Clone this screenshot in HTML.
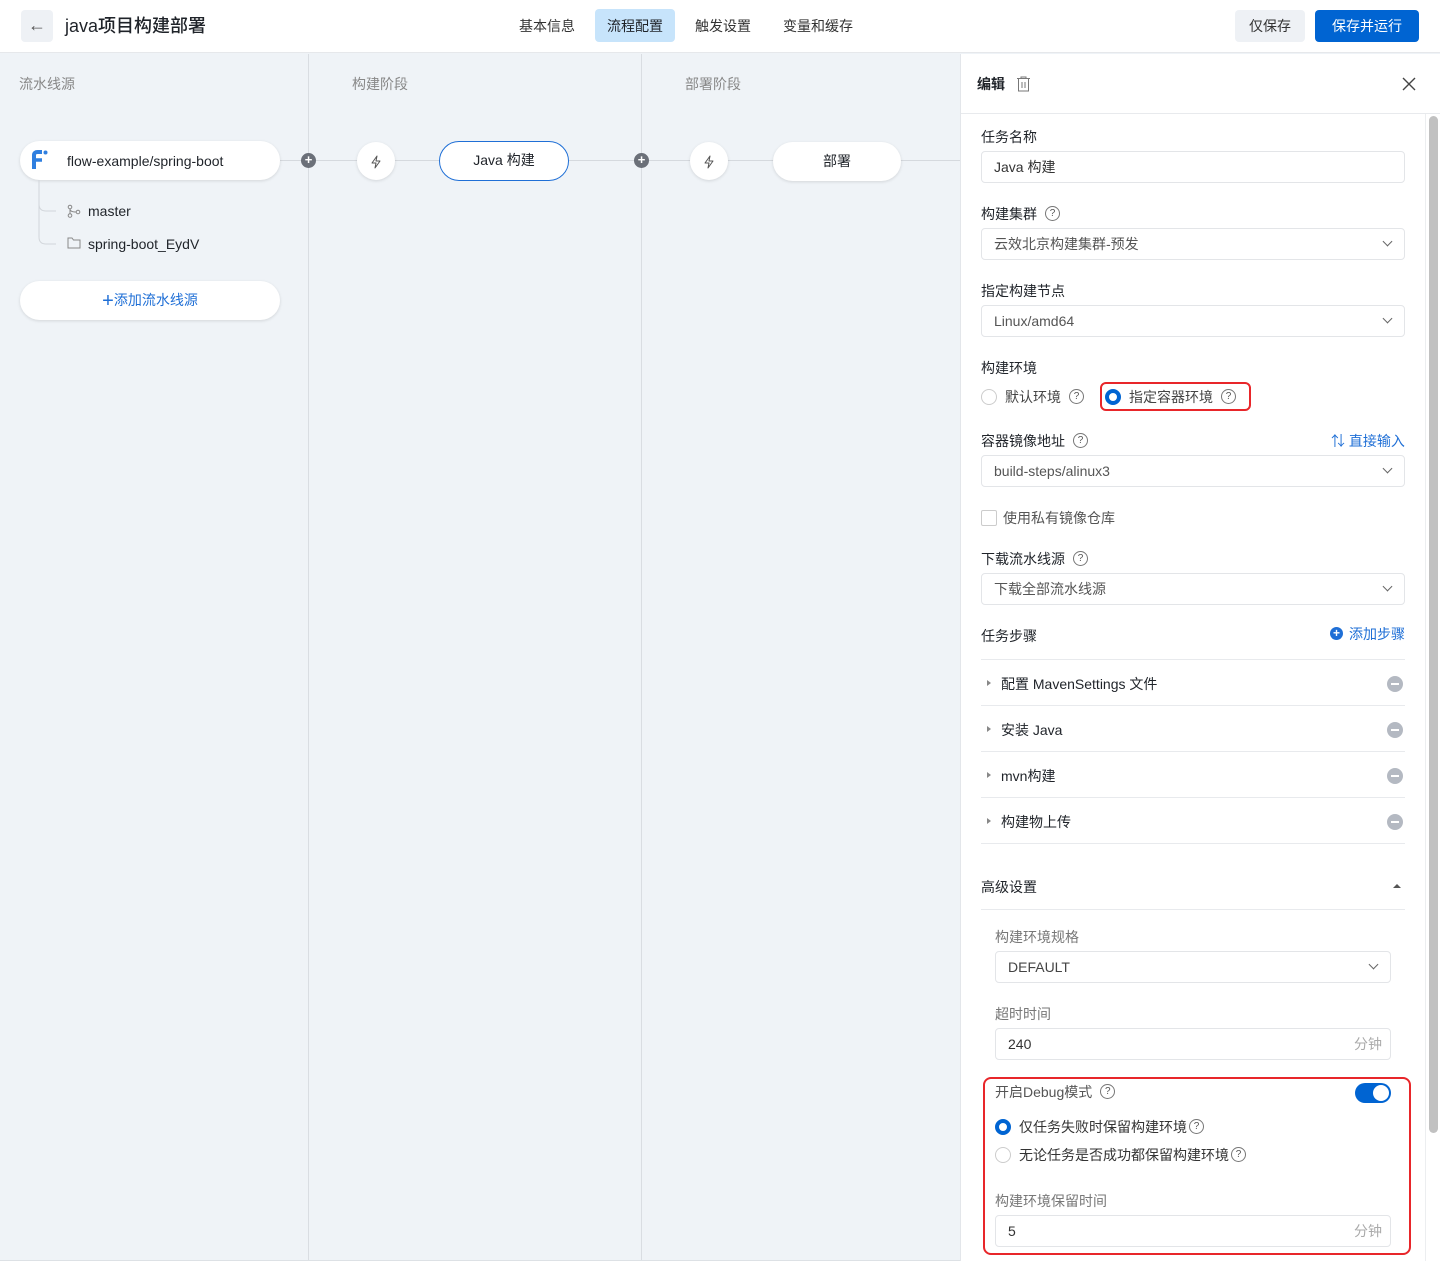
<!DOCTYPE html>
<html><head><meta charset="utf-8"><style>
*{box-sizing:border-box;margin:0;padding:0}
body{width:1440px;height:1261px;position:relative;overflow:hidden;background:#eff3f7;font-family:"Liberation Sans","Noto Sans CJK SC",sans-serif;font-size:14px;color:#1f2329}
.a{position:absolute}
.t{position:absolute;height:20px;line-height:20px;white-space:nowrap}
.box{position:absolute;border:1px solid #e3e5e8;border-radius:4px;background:#fff;height:32px;line-height:30px;padding-left:12px;color:#555}
.chev{position:absolute;right:13px;top:9px;width:7px;height:7px;border-right:1.4px solid #666;border-bottom:1.4px solid #666;transform:rotate(45deg)}
.q{display:inline-block;width:15px;height:15px;border:1.2px solid #777;border-radius:50%;font-size:10px;line-height:13px;text-align:center;color:#555;vertical-align:top;margin-top:2px;margin-left:8px}
.hl{position:absolute;height:1px;background:#e8eaed}
.minus{position:absolute;left:1387px;width:16px;height:16px;border-radius:50%;background:#b4b9c2}
.minus:after{content:"";position:absolute;left:4px;top:7px;width:8px;height:2px;background:#fff}
.tri{position:absolute;left:987px;width:0;height:0;border-left:4px solid #888;border-top:3.5px solid transparent;border-bottom:3.5px solid transparent}
.lab{color:#1f2329}
.gl{color:#777}
</style></head><body>
<div class="a" style="left:0;top:0;width:1440px;height:53px;background:#fff;border-bottom:1px solid #e6e8eb"></div>
<div class="a" style="left:21px;top:10px;width:32px;height:32px;background:#eef1f5;border-radius:4px;text-align:center;line-height:30px;font-size:18px;color:#555">←</div>
<div class="t" style="left:65px;top:15px;font-size:18px;font-weight:500;height:22px;line-height:22px">java项目构建部署</div>
<div class="t" style="left:519px;top:16px;color:#333">基本信息</div>
<div class="a" style="left:595px;top:9px;width:80px;height:33px;background:#c7e4fb;border-radius:4px"></div>
<div class="t" style="left:607px;top:16px;color:#1f2329">流程配置</div>
<div class="t" style="left:695px;top:16px;color:#333">触发设置</div>
<div class="t" style="left:783px;top:16px;color:#333">变量和缓存</div>
<div class="a" style="left:1235px;top:10px;width:70px;height:32px;background:#eef1f5;border-radius:4px;text-align:center;line-height:32px;color:#333">仅保存</div>
<div class="a" style="left:1315px;top:10px;width:104px;height:32px;background:#0064d2;border-radius:4px;text-align:center;line-height:32px;color:#fff">保存并运行</div>

<div class="a" style="left:308px;top:54px;width:1px;height:1207px;background:#d9dde2"></div>
<div class="a" style="left:641px;top:54px;width:1px;height:1207px;background:#d9dde2"></div>
<div class="a" style="left:0;top:1260px;width:960px;height:1px;background:#dde1e5"></div>
<div class="t" style="left:19px;top:74px;color:#888">流水线源</div>
<div class="t" style="left:352px;top:74px;color:#888">构建阶段</div>
<div class="t" style="left:685px;top:74px;color:#888">部署阶段</div>
<div class="a" style="left:280px;top:160px;width:680px;height:1px;background:#d5d9de"></div>

<div class="a" style="left:20px;top:141px;width:260px;height:39px;background:#fff;border-radius:20px;box-shadow:0 1px 3px rgba(0,0,0,.12)"></div>
<svg class="a" style="left:31px;top:149px" width="18" height="22" viewBox="0 0 18 22"><path d="M3 20V6c0-2 1.5-3 3.5-3H11" stroke="#2f7fe0" stroke-width="4" fill="none"/><path d="M5 11h6" stroke="#2f7fe0" stroke-width="3.5"/><circle cx="14.5" cy="3.5" r="2" fill="#2f7fe0"/></svg>
<div class="t" style="left:67px;top:151px">flow-example/spring-boot</div>
<svg class="a" style="left:36px;top:180px" width="30" height="66"><path d="M3 0V24q0 7 7 7h10M3 24V57q0 7 7 7h10" stroke="#d2d6db" fill="none"/></svg>
<svg class="a" style="left:67px;top:204px" width="14" height="14" viewBox="0 0 14 14"><circle cx="3" cy="3" r="1.8" stroke="#888" fill="none"/><circle cx="3" cy="11.5" r="1.8" stroke="#888" fill="none"/><circle cx="11" cy="8" r="1.8" stroke="#888" fill="none"/><path d="M3 5v5M3 5q0 3 6 3" stroke="#888" fill="none"/></svg>
<div class="t" style="left:88px;top:201px">master</div>
<svg class="a" style="left:67px;top:237px" width="14" height="12"><path d="M1 1h4l1.5 2H13v8H1z" stroke="#888" fill="none"/></svg>
<div class="t" style="left:88px;top:234px">spring-boot_EydV</div>
<div class="a" style="left:20px;top:281px;width:260px;height:39px;background:#fff;border-radius:20px;box-shadow:0 1px 3px rgba(0,0,0,.12);text-align:center;line-height:39px;color:#1f6fd6"><span style="font-size:20px;vertical-align:-2px">+</span>添加流水线源</div>

<div class="a" style="left:301px;top:153px;width:15px;height:15px;border-radius:50%;background:#6b7079;color:#fff;font-size:13px;line-height:14px;text-align:center;font-weight:bold">+</div>
<div class="a" style="left:634px;top:153px;width:15px;height:15px;border-radius:50%;background:#6b7079;color:#fff;font-size:13px;line-height:14px;text-align:center;font-weight:bold">+</div>
<div class="a" style="left:357px;top:142px;width:38px;height:38px;border-radius:50%;background:#fff;box-shadow:0 1px 3px rgba(0,0,0,.12)"></div>
<svg class="a" style="left:370px;top:155px" width="12" height="14"><path d="M7 1L2 8h4l-1 5 5-7H6z" stroke="#555" fill="none" stroke-linejoin="round"/></svg>
<div class="a" style="left:690px;top:142px;width:38px;height:38px;border-radius:50%;background:#fff;box-shadow:0 1px 3px rgba(0,0,0,.12)"></div>
<svg class="a" style="left:703px;top:155px" width="12" height="14"><path d="M7 1L2 8h4l-1 5 5-7H6z" stroke="#555" fill="none" stroke-linejoin="round"/></svg>
<div class="a" style="left:439px;top:141px;width:130px;height:40px;border-radius:20px;background:#fff;border:1.5px solid #1f6fd6;text-align:center;line-height:37px">Java 构建</div>
<div class="a" style="left:773px;top:142px;width:128px;height:39px;border-radius:20px;background:#fff;box-shadow:0 1px 3px rgba(0,0,0,.12);text-align:center;line-height:39px">部署</div>

<div class="a" style="left:960px;top:54px;width:480px;height:1207px;background:#fff;border-left:1px solid #e3e6ea"></div>
<div class="a" style="left:961px;top:113px;width:479px;height:1px;background:#e8eaed"></div>
<div class="t" style="left:977px;top:74px;font-weight:bold">编辑</div>
<svg class="a" style="left:1016px;top:76px" width="15" height="16"><path d="M1 2.5h13M5 2.5V1h5v1.5M2.5 2.5V15h10V2.5M6 6v6M9 6v6" stroke="#777" fill="none"/></svg>
<svg class="a" style="left:1402px;top:77px" width="14" height="14"><path d="M1 1l12 12M13 1L1 13" stroke="#444" stroke-width="1.4"/></svg>
<div class="a" style="left:1425px;top:114px;width:1px;height:1147px;background:#eceef0"></div>
<div class="a" style="left:1429px;top:116px;width:9px;height:1017px;border-radius:5px;background:#c1c1c1"></div>

<div class="t lab" style="left:981px;top:127px">任务名称</div>
<div class="box" style="left:981px;top:151px;width:424px;color:#333">Java 构建</div>
<div class="t lab" style="left:981px;top:204px">构建集群<span class="q">?</span></div>
<div class="box" style="left:981px;top:228px;width:424px">云效北京构建集群-预发<i class="chev"></i></div>
<div class="t lab" style="left:981px;top:281px">指定构建节点</div>
<div class="box" style="left:981px;top:305px;width:424px">Linux/amd64<i class="chev"></i></div>
<div class="t lab" style="left:981px;top:358px">构建环境</div>
<div class="a" style="left:981px;top:389px;width:16px;height:16px;border-radius:50%;border:1px solid #ccc"></div>
<div class="t" style="left:1005px;top:387px;color:#444">默认环境<span class="q">?</span></div>
<div class="a" style="left:1100px;top:382px;width:151px;height:29px;border:2px solid #e8262a;border-radius:6px"></div>
<div class="a" style="left:1105px;top:389px;width:16px;height:16px;border-radius:50%;border:4.5px solid #0064d2"></div>
<div class="t" style="left:1129px;top:387px;color:#444">指定容器环境<span class="q">?</span></div>
<div class="t lab" style="left:981px;top:431px">容器镜像地址<span class="q">?</span></div>
<div class="t" style="left:1331px;top:431px;color:#1f6fd6">⇅ 直接输入</div>
<div class="box" style="left:981px;top:455px;width:424px">build-steps/alinux3<i class="chev"></i></div>
<div class="a" style="left:981px;top:510px;width:16px;height:16px;border:1px solid #ccc;border-radius:2px"></div>
<div class="t" style="left:1003px;top:508px;color:#555">使用私有镜像仓库</div>
<div class="t lab" style="left:981px;top:549px">下载流水线源<span class="q">?</span></div>
<div class="box" style="left:981px;top:573px;width:424px">下载全部流水线源<i class="chev"></i></div>
<div class="t lab" style="left:981px;top:626px">任务步骤</div>
<div class="a" style="left:1330px;top:627px;width:13px;height:13px;border-radius:50%;background:#1f6fd6;color:#fff;font-size:12px;line-height:13px;text-align:center;font-weight:bold">+</div>
<div class="t" style="left:1349px;top:624px;color:#1f6fd6">添加步骤</div>
<div class="hl" style="left:981px;top:659px;width:424px"></div>
<div class="tri" style="top:680px"></div><div class="t" style="left:1001px;top:674px">配置 MavenSettings 文件</div><div class="minus" style="top:676px"></div>
<div class="hl" style="left:981px;top:705px;width:424px"></div>
<div class="tri" style="top:726px"></div><div class="t" style="left:1001px;top:720px">安装 Java</div><div class="minus" style="top:722px"></div>
<div class="hl" style="left:981px;top:751px;width:424px"></div>
<div class="tri" style="top:772px"></div><div class="t" style="left:1001px;top:766px">mvn构建</div><div class="minus" style="top:768px"></div>
<div class="hl" style="left:981px;top:797px;width:424px"></div>
<div class="tri" style="top:818px"></div><div class="t" style="left:1001px;top:812px">构建物上传</div><div class="minus" style="top:814px"></div>
<div class="hl" style="left:981px;top:843px;width:424px"></div>
<div class="t lab" style="left:981px;top:877px">高级设置</div>
<div class="a" style="left:1393px;top:884px;border-bottom:4px solid #555;border-left:4px solid transparent;border-right:4px solid transparent"></div>
<div class="hl" style="left:981px;top:909px;width:424px"></div>
<div class="t gl" style="left:995px;top:927px">构建环境规格</div>
<div class="box" style="left:995px;top:951px;width:396px;color:#444">DEFAULT<i class="chev"></i></div>
<div class="t gl" style="left:995px;top:1004px">超时时间</div>
<div class="box" style="left:995px;top:1028px;width:396px;color:#333">240<span style="position:absolute;right:8px;color:#aaa">分钟</span></div>
<div class="a" style="left:983px;top:1077px;width:428px;height:178px;border:2px solid #e8262a;border-radius:8px"></div>
<div class="t" style="left:995px;top:1082px;color:#555">开启Debug模式<span class="q">?</span></div>
<div class="a" style="left:1355px;top:1083px;width:36px;height:20px;border-radius:10px;background:#0064d2"></div>
<div class="a" style="left:1373px;top:1085px;width:16px;height:16px;border-radius:50%;background:#fff"></div>
<div class="a" style="left:995px;top:1119px;width:16px;height:16px;border-radius:50%;border:4.5px solid #0064d2"></div>
<div class="t" style="left:1019px;top:1117px;color:#333">仅任务失败时保留构建环境<span class="q" style="margin-left:2px">?</span></div>
<div class="a" style="left:995px;top:1147px;width:16px;height:16px;border-radius:50%;border:1px solid #ccc"></div>
<div class="t" style="left:1019px;top:1145px;color:#333">无论任务是否成功都保留构建环境<span class="q" style="margin-left:2px">?</span></div>
<div class="t gl" style="left:995px;top:1191px">构建环境保留时间</div>
<div class="box" style="left:995px;top:1215px;width:396px;color:#333">5<span style="position:absolute;right:8px;color:#aaa">分钟</span></div>
</body></html>
